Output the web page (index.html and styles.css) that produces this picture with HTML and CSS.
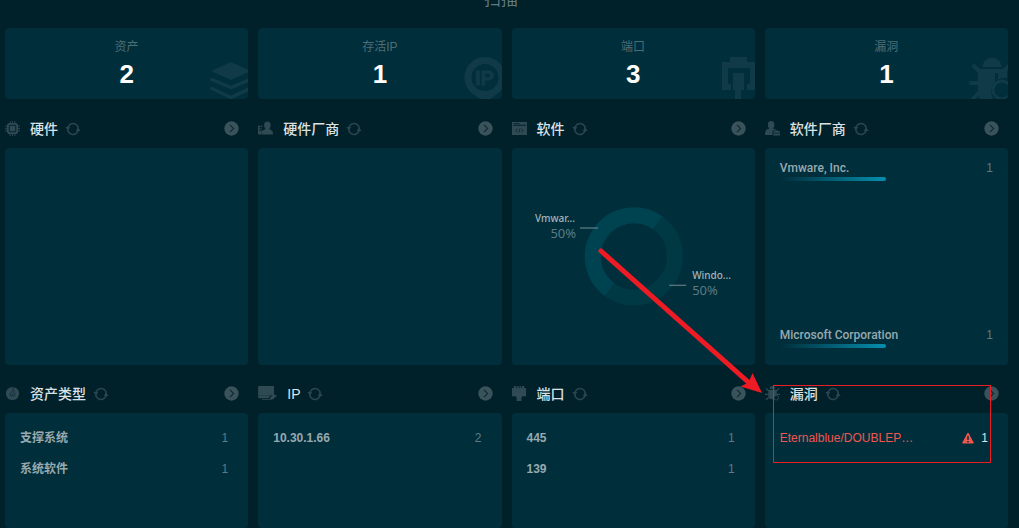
FILE: index.html
```html
<!DOCTYPE html>
<html lang="zh-CN">
<head>
<meta charset="utf-8">
<title>扫描</title>
<link rel="stylesheet" href="styles.css">
</head>
<body>
<svg class="defs" aria-hidden="true">
  <defs>
    <symbol id="refresh" viewBox="0 0 16 14"><g fill="none" stroke="currentColor" stroke-width="1.6"><path d="M2.800 7.500A5.300 5.300 0 0 1 4.500 3M5.800 2A5.300 5.300 0 0 1 13.300 7M13.200 6.500A5.300 5.300 0 0 1 11.500 11M10.200 12A5.300 5.300 0 0 1 2.700 7M4.200 3.200A5.300 5.300 0 0 1 6 2M11.800 10.800A5.300 5.300 0 0 1 10 12"/></g><path fill="currentColor" d="M.3 5h5L3 8.500zM10.700 9h5L13 5.500z"/></symbol>
    <symbol id="go" viewBox="0 0 15 15"><circle cx="7.500" cy="7.500" r="7.200" fill="currentColor"/><path d="M6 3.800l3.600 3.700L6 11.200" fill="none" stroke="#0c2933" stroke-width="1.100"/></symbol>
  </defs>
</svg>
<header class="top"><h1 class="top-title">扫描</h1></header>
<main class="board">
  <section class="stat"><h2 class="stat-name">资产</h2><p class="stat-value">2</p>
    <svg class="mark" viewBox="0 0 43 43"><path fill="currentColor" d="M6 15L26 6l20 9L26 24z"/><path fill="none" stroke="currentColor" stroke-width="3.500" stroke-linecap="round" d="M7 23.500l19 8 19-8M7 32.500l19 9 19-9"/></svg></section>
  <section class="stat"><h2 class="stat-name">存活IP</h2><p class="stat-value">1</p>
    <svg class="mark" viewBox="0 0 43 43"><path fill="currentColor" fill-rule="evenodd" d="M26 1a20.500 20.500 0 0 0-14 35.500L22 44h8l10-7.500A20.500 20.500 0 0 0 26 1zm0 7a13.500 13.500 0 1 1 0 27 13.500 13.500 0 0 1 0-27z"/><text class="mark-text" x="16" y="29">IP</text></svg></section>
  <section class="stat"><h2 class="stat-name">端口</h2><p class="stat-value">3</p>
    <svg class="mark" viewBox="0 0 43 43"><path fill="currentColor" d="M10 6h8V1h17v5h8v28h-8v-6h3V12H16v16h3v6h-9zM21 17h11v17h-3v9h-6v-9h-2z"/></svg></section>
  <section class="stat"><h2 class="stat-name">漏洞</h2><p class="stat-value">1</p>
    <svg class="mark" viewBox="0 0 43 43"><path fill="currentColor" d="M17.500 11a9.500 9.500 0 0 1 19 0zM13 13h29v9q-6-1-9 2V17h-3v9q-6 7-2 17H15q-2-3-2-8z"/><path stroke="currentColor" stroke-width="4" stroke-linecap="round" fill="none" d="M9 10l6 6M6 27h9M8 43l7-7M44 10l-5 5"/><circle cx="37" cy="34" r="9" fill="none" stroke="currentColor" stroke-width="3"/></svg></section>

  <section class="block">
    <div class="head"><svg class="icon" viewBox="0 0 16 16"><path fill="currentColor" fill-rule="evenodd" d="M4 2h8l2 2v8l-2 2H4l-2-2V4zm1 2L4 5v6l1 1h6l1-1V5l-1-1z"/><path fill="currentColor" d="M5 5h6v6H5z"/><path stroke="currentColor" d="M5.500 0v2M8 0v2M10.500 0v2M5.500 14v2M8 14v2M10.500 14v2M0 5.500h2M0 8h2M0 10.500h2M14 5.500h2M14 8h2M14 10.500h2"/></svg><h2 class="name">硬件</h2><button class="refresh" aria-label="刷新"><svg><use href="#refresh"/></svg></button><button class="go" aria-label="更多"><svg><use href="#go"/></svg></button></div>
    <div class="panel"></div>
  </section>
  <section class="block">
    <div class="head"><svg class="icon" viewBox="0 0 16 16"><path fill="currentColor" d="M0 5h5v1H1.500v2H4v1H1.500v2L4 9.500 3 14.500H0zM6.500 4.500a3.500 4 0 1 1 7 0Q13.500 7 12 8.500l3 2q1 1 1 4H3.500q0-3 1-4l3.500-2Q6.500 7 6.500 4.500z"/></svg><h2 class="name">硬件厂商</h2><button class="refresh" aria-label="刷新"><svg><use href="#refresh"/></svg></button><button class="go" aria-label="更多"><svg><use href="#go"/></svg></button></div>
    <div class="panel"></div>
  </section>
  <section class="block">
    <div class="head"><svg class="icon" viewBox="0 0 16 16"><path fill="currentColor" fill-rule="evenodd" d="M0 1h16v14H0zM1 4v1h14V4zM2 2v1h6V2z"/><path d="M6 8L4 10l2 2M10 8l2 2-2 2M8.500 8l-1 4" fill="none" stroke="#0c2933"/></svg><h2 class="name">软件</h2><button class="refresh" aria-label="刷新"><svg><use href="#refresh"/></svg></button><button class="go" aria-label="更多"><svg><use href="#go"/></svg></button></div>
    <div class="panel chart">
      <svg class="donut" viewBox="0 0 243 217" role="img" aria-label="Vmware 50%, Windows 50%">
        <g fill="none" stroke-width="16"><path stroke="#004350" d="M145.700 75A41 41 0 1 0 97.700 141.500"/><path stroke="#003844" d="M145.700 75A41 41 0 0 1 97.700 141.500"/></g>
        <path stroke="#6f8b94" d="M68 80h18M157 137h17"/>
        <text class="slice" x="63" y="74" text-anchor="end">Vmwar...</text><text class="share" x="64" y="90" text-anchor="end">50%</text>
        <text class="slice" x="180" y="131">Windo...</text><text class="share" x="180" y="147">50%</text>
      </svg>
    </div>
  </section>
  <section class="block">
    <div class="head"><svg class="icon" viewBox="0 0 16 16"><path fill="currentColor" d="M3 4a3.500 4 0 0 1 7 0q0 2.500-1.500 4l3 1v1H8v5H0q0-5 2-6l2.500-1Q3 6.500 3 4zM8.800 11H11v-1h3v1h2v1.500H8.800zM8.800 13.200H16v2.300H8.800z"/></svg><h2 class="name">软件厂商</h2><button class="refresh" aria-label="刷新"><svg><use href="#refresh"/></svg></button><button class="go" aria-label="更多"><svg><use href="#go"/></svg></button></div>
    <ul class="panel vendors">
      <li class="vendor"><div class="line"><span>Vmware, Inc.</span><span class="count">1</span></div><div class="bar"></div></li>
      <li class="vendor"><div class="line"><span>Microsoft Corporation</span><span class="count">1</span></div><div class="bar"></div></li>
    </ul>
  </section>

  <section class="block">
    <div class="head"><svg class="icon" viewBox="0 0 16 16"><circle cx="8" cy="8" r="7" fill="currentColor"/><path d="M8.500 1v3.500l2 1M5.500 10.500V8L8 5.500 10.500 8v2.500zM8 8v1.500" fill="none" stroke="#0c2933" stroke-width=".8"/></svg><h2 class="name">资产类型</h2><button class="refresh" aria-label="刷新"><svg><use href="#refresh"/></svg></button><button class="go" aria-label="更多"><svg><use href="#go"/></svg></button></div>
    <ul class="panel list"><li class="line">支撑系统<span class="count">1</span></li><li class="line">系统软件<span class="count">1</span></li></ul>
  </section>
  <section class="block">
    <div class="head"><svg class="icon wide" viewBox="0 0 20 16"><path fill="currentColor" d="M1 0h15q1 0 1 1v9H0V1q0-1 1-1zM0 10.500h13l-2 2.500H1q-1 0-1-1zM4 14h8v1H4zM12 15l1-3 4-3 3 1-4 4z"/></svg><h2 class="name">IP</h2><button class="refresh" aria-label="刷新"><svg><use href="#refresh"/></svg></button><button class="go" aria-label="更多"><svg><use href="#go"/></svg></button></div>
    <ul class="panel list"><li class="line">10.30.1.66<span class="count">2</span></li></ul>
  </section>
  <section class="block">
    <div class="head"><svg class="icon" viewBox="0 0 16 16"><path fill="currentColor" d="M2 0h2.500v2h1V0h1.500v2h1V0h1.500v2h1V0H13v2h2v9h-4v1h-1v4H5v-4H4v-1H0V2h2z"/></svg><h2 class="name">端口</h2><button class="refresh" aria-label="刷新"><svg><use href="#refresh"/></svg></button><button class="go" aria-label="更多"><svg><use href="#go"/></svg></button></div>
    <ul class="panel list"><li class="line">445<span class="count">1</span></li><li class="line">139<span class="count">1</span></li></ul>
  </section>
  <section class="block">
    <div class="head"><svg class="icon" viewBox="0 0 16 16"><path fill="currentColor" d="M5 3a3 3 0 0 1 6 0zM3.500 4h9v6q-3 0-3 4H6q-2.500-1-2.500-4z"/><path fill="none" stroke="currentColor" stroke-width="1.400" d="M1 2.500l3 3M15 2.500l-3 3M0 9h4M12 9h4M1 15l3-3"/><circle cx="12" cy="12.500" r="2.500" fill="none" stroke="currentColor"/></svg><h2 class="name">漏洞</h2><button class="refresh" aria-label="刷新"><svg><use href="#refresh"/></svg></button><button class="go" aria-label="更多"><svg><use href="#go"/></svg></button></div>
    <ul class="panel list"><li class="line alert"><span>Eternalblue/DOUBLEP…</span><span class="level"><svg class="warn" viewBox="0 0 12 12"><path fill="#f25650" stroke="#f25650" stroke-linejoin="round" d="M6 1l5.400 10H.6z"/><path d="M6 4v4M6 9v1.500" stroke="#002e3b" stroke-width="1.400"/></svg>1</span></li></ul>
    <div class="frame"></div>
  </section>
</main>
<svg class="arrow" viewBox="0 0 164 146" aria-hidden="true"><path d="M3 3l146 130" stroke="#ed1c24" stroke-width="5" stroke-linecap="round"/><path fill="#ed1c24" d="M164 145l-9.500-20-2.500 6-4.500 5-5 2.500z"/></svg>
</body>
</html>
```
FILE: styles.css
```css
* { box-sizing: border-box; }
body, h1, h2, p, ul { margin: 0; padding: 0; }
body {
  height: 100vh;
  display: flex;
  flex-direction: column;
  overflow: hidden;
  position: relative;
  background: #00202a;
  color: #98a9af;
  font: 12px/18px "Liberation Sans", "Noto Sans CJK SC", sans-serif;
}
.defs { position: absolute; width: 0; height: 0; }
.top { height: 28px; display: flex; justify-content: center; align-items: flex-start; padding-right: 17px; flex: none; }
.top-title { font-size: 17px; line-height: 20px; font-weight: 400; color: #617980; margin-top: -10px; }
.board {
  flex: 1;
  display: grid;
  grid-template-columns: repeat(4, minmax(0, 1fr));
  grid-template-rows: 71px 266px 1fr;
  column-gap: 10px;
  padding: 0 11px 0 5px;
}
.stat { position: relative; overflow: hidden; border-radius: 4px; background: #002e3b; text-align: center; padding-top: 10px; }
.stat-name { font-size: 12px; line-height: 18px; font-weight: 400; color: #4d6d76; }
.stat-value { font-size: 26px; line-height: 36px; font-weight: 700; color: #fff; }
.mark { position: absolute; right: 0; bottom: 0; width: 43px; height: 43px; color: #103a47; }
.mark-text { font: 700 20px "Liberation Sans", sans-serif; fill: currentColor; stroke: currentColor; stroke-width: 1px; }
.block { position: relative; display: flex; flex-direction: column; min-height: 0; }
.head { height: 49px; flex: none; display: flex; align-items: center; padding: 10px 9px 0 0; }
.block:nth-child(n+9) .head { height: 48px; padding-top: 9px; }
.icon { width: 15px; height: 15px; flex: none; color: #304a53; margin-right: 10px; }
.icon.wide { width: 19px; }
.name { font-size: 14px; line-height: 20px; font-weight: 500; color: #dce2e4; }
button { appearance: none; border: 0; padding: 0; background: none; }
.refresh { margin-left: 7px; width: 16px; height: 14px; color: #29454f; }
.go { margin-left: auto; width: 15px; height: 15px; color: #3a525a; }
button svg { display: block; width: 100%; height: 100%; }
.panel { flex: 1; list-style: none; border-radius: 4px; background: #002e3b; }
.line { display: flex; justify-content: space-between; font-weight: 700; }
.line:lang(zh) { font-family: "Liberation Sans", "Noto Sans CJK SC", sans-serif; }
.count { font-weight: 400; color: #5d7b84; }
.list { padding: 16px 20px 0 15px; display: flex; flex-direction: column; gap: 13px; }
.vendors { padding: 11px 15px 17px; display: flex; flex-direction: column; justify-content: space-between; }
.vendors .line { font-family: Roboto, sans-serif; font-weight: 500; }
.vendors .count { font-family: "Liberation Sans", sans-serif; font-weight: 400; }
.bar { width: 50%; height: 4px; border-radius: 2px; background: linear-gradient(90deg, #002e3b, #078eae); }
.donut { display: block; width: 100%; height: 100%; }
.slice { font: 500 10px "Noto Sans", sans-serif; fill: #a4b3b8; }
.share { font: 13px "Noto Sans", sans-serif; fill: #5d7b84; }
.list .alert { font-weight: 400; color: #f25650; }
.level { display: flex; align-items: center; gap: 7px; color: #dce2e4; }
.warn { width: 12px; height: 12px; }
.frame { position: absolute; left: 8px; right: 17px; top: 20px; height: 78px; border: 1px solid #ed1c24; }
.arrow { position: absolute; left: 598px; top: 248px; width: 164px; height: 146px; }
```
